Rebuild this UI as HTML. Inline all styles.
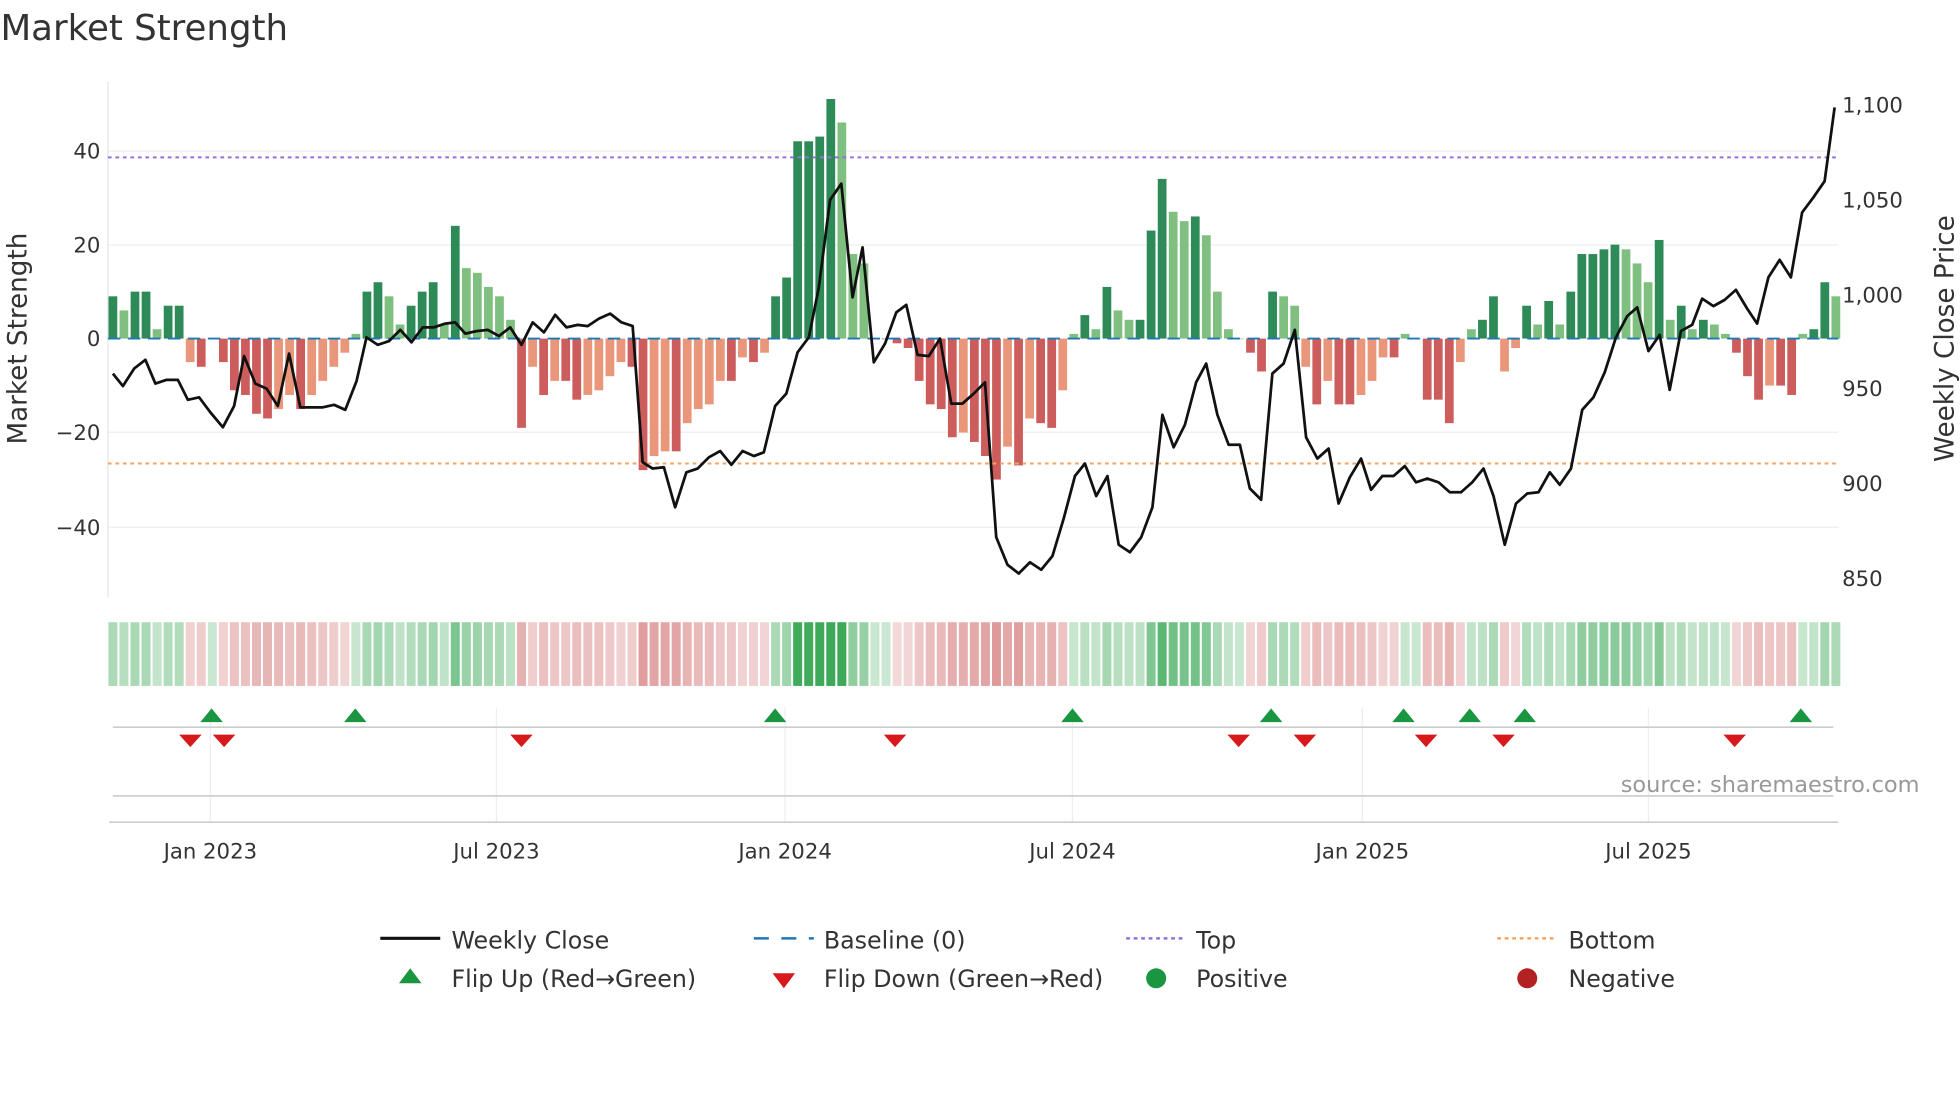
<!DOCTYPE html>
<html><head><meta charset="utf-8"><style>
html,body{margin:0;padding:0;background:#fff;width:1960px;height:1102px;overflow:hidden}
svg{display:block;font-family:"DejaVu Sans","Liberation Sans",sans-serif}
</style></head><body>
<svg id="c" width="1960" height="1102" viewBox="0 0 1568 882" xmlns="http://www.w3.org/2000/svg">
<text x="0" y="32" font-size="28.5" fill="#333">Market Strength</text>
<g stroke="#eee" stroke-width="1">
<line x1="86" x2="1471" y1="121" y2="121"/><line x1="86" x2="1471" y1="196" y2="196"/>
<line x1="86" x2="1471" y1="346" y2="346"/><line x1="86" x2="1471" y1="422" y2="422"/>
</g>
<line x1="86" y1="65" x2="86" y2="478" stroke="#e6e6e6"/>
<g id="bars"></g>
<line x1="86" x2="1471" y1="271" y2="271" stroke="#1f77b4" stroke-width="1.5" stroke-dasharray="10,6"/>
<line x1="86" x2="1471" y1="126" y2="126" stroke="#9370db" stroke-width="1.6" stroke-dasharray="3,3"/>
<line x1="86" x2="1471" y1="371" y2="371" stroke="#f4a460" stroke-width="1.6" stroke-dasharray="3,3"/>
<polyline id="price" fill="none" stroke="#111" stroke-width="2.2" stroke-linejoin="round"/>
<g font-size="17" fill="#333" text-anchor="end">
<text x="80" y="127">40</text><text x="80" y="202">20</text><text x="80" y="277">0</text>
<text x="80" y="352">−20</text><text x="80" y="428">−40</text></g>
<g font-size="17" fill="#333">
<text x="1474" y="90">1,100</text><text x="1474" y="166">1,050</text><text x="1474" y="242">1,000</text>
<text x="1474" y="317">950</text><text x="1474" y="393">900</text><text x="1474" y="469">850</text></g>
<text transform="translate(21,271) rotate(-90)" font-size="21" fill="#333" text-anchor="middle">Market Strength</text>
<text transform="translate(1563,271) rotate(-90)" font-size="21" fill="#333" text-anchor="middle">Weekly Close Price</text>
<g id="heat"></g>
<g stroke="#eee"><line x1="168" x2="168" y1="566" y2="658"/><line x1="397" x2="397" y1="566" y2="658"/><line x1="628" x2="628" y1="566" y2="658"/><line x1="858" x2="858" y1="566" y2="658"/><line x1="1090" x2="1090" y1="566" y2="658"/><line x1="1319" x2="1319" y1="566" y2="658"/></g>
<line x1="90" x2="1467" y1="582" y2="582" stroke="#ccc" stroke-width="1.3"/>
<line x1="90" x2="1467" y1="637" y2="637" stroke="#ccc" stroke-width="1.3"/>
<line x1="87" x2="1471" y1="658" y2="658" stroke="#ccc" stroke-width="1.3"/>
<g id="marks"></g>
<text x="1536" y="634" font-size="18" fill="#999" text-anchor="end">source: sharemaestro.com</text>
<g font-size="17" fill="#333" text-anchor="middle">
<text x="168" y="687">Jan 2023</text><text x="397" y="687">Jul 2023</text><text x="628" y="687">Jan 2024</text>
<text x="858" y="687">Jul 2024</text><text x="1090" y="687">Jan 2025</text><text x="1319" y="687">Jul 2025</text></g>
<g font-size="19" fill="#333">
<line x1="304" x2="352" y1="751" y2="751" stroke="#111" stroke-width="2.5"/><text x="361" y="759">Weekly Close</text>
<line x1="603" x2="651" y1="751" y2="751" stroke="#1f77b4" stroke-width="2" stroke-dasharray="12,10"/><text x="659" y="759">Baseline (0)</text>
<line x1="901" x2="949" y1="751" y2="751" stroke="#9370db" stroke-width="2" stroke-dasharray="3,3"/><text x="957" y="759">Top</text>
<line x1="1198" x2="1246" y1="751" y2="751" stroke="#f4a460" stroke-width="2" stroke-dasharray="3,3"/><text x="1255" y="759">Bottom</text>
<polygon points="328,775 319,787 337,787" fill="#1a9641"/><text x="361" y="790">Flip Up (Red→Green)</text>
<polygon points="618,779 636,779 627,791" fill="#d7191c"/><text x="659" y="790">Flip Down (Green→Red)</text>
<circle cx="925" cy="783" r="8" fill="#1a9641"/><text x="957" y="790">Positive</text>
<circle cx="1222" cy="783" r="8" fill="#b22222"/><text x="1255" y="790">Negative</text>
</g>
</svg>
<script>
var v=[9,6,10,10,2,7,7,-5,-6,0,-5,-11,-12,-16,-17,-15,-12,-15,-12,-9,-6,-3,1,10,12,9,3,7,10,12,3,24,15,14,11,9,4,-19,-6,-12,-9,-9,-13,-12,-11,-8,-5,-6,-28,-25,-24,-24,-18,-15,-14,-9,-9,-4,-5,-3,9,13,42,42,43,51,46,18,16,0,0,-1,-2,-9,-14,-15,-21,-20,-22,-25,-30,-23,-27,-17,-18,-19,-11,1,5,2,11,6,4,4,23,34,27,25,26,22,10,2,0,-3,-7,10,9,7,-6,-14,-9,-14,-14,-12,-9,-4,-4,1,0,-13,-13,-18,-5,2,4,9,-7,-2,7,3,8,3,10,18,18,19,20,19,16,12,21,4,7,2,4,3,1,-3,-8,-13,-10,-10,-12,1,2,12,9];
var ns="http://www.w3.org/2000/svg",n=v.length,x0=90,st=(1469-90)/(n-1);
var B=document.getElementById("bars"),H=document.getElementById("heat");
function el(t,a,p){var e=document.createElementNS(ns,t);for(var k in a)e.setAttribute(k,a[k]);p.appendChild(e);}
for(var i=0;i<n;i++){var x=x0+i*st,val=v[i],prev=i?v[i-1]:0;
var inc=Math.abs(val)>=Math.abs(prev);var c;
if(val>=0)c=inc?"#2e8b57":"#7fbf7f";else c=inc?"#cd5c5c":"#e9967a";
var y=271-val*3.76;el("rect",{x:x-3.5,y:Math.min(y,271),width:7,height:Math.max(Math.abs(val*3.76),0.5),fill:c},B);
var a=Math.min(1,0.28+Math.abs(val)/60);var hc=val>=0?"rgba(40,160,70,"+(a*0.9)+")":"rgba(200,80,80,"+(a*0.75)+")";
el("rect",{x:x-3.6,y:498,width:7.2,height:51,fill:hc},H);}
var p=[90,299,98,309,107,295,116,288,124,307,133,304,142,304,150,320,159,318,168,330,178,342,187,325,195,285,204,307,213,311,222,325,231,283,240,326,249,326,258,326,267,324,276,328,285,305,293,270,302,276,311,273,320,264,329,274,338,262,347,262,356,259,364,258,372,267,381,265,390,264,399,269,408,262,417,276,426,258,435,266,444,252,453,262,462,260,470,261,479,255,488,251,497,258,506,261,514,370,522,375,531,374,540,406,549,378,558,375,567,366,576,361,585,372,594,361,603,365,611,362,620,325,629,315,638,282,647,270,655,230,664,160,673,147,682,238,690,198,699,290,708,275,717,250,725,244,734,284,743,285,752,271,761,323,770,323,779,315,788,306,797,430,806,452,815,459,824,450,833,456,842,445,851,415,860,381,868,371,877,397,886,381,895,436,904,442,913,430,922,406,930,332,939,358,948,340,957,306,965,291,974,332,983,356,992,356,1000,391,1009,400,1018,299,1027,291,1036,264,1045,350,1054,367,1063,359,1071,403,1080,382,1089,367,1097,392,1106,381,1115,381,1124,373,1133,386,1142,383,1151,386,1160,394,1169,394,1178,386,1187,375,1195,397,1204,436,1213,403,1222,395,1231,394,1240,378,1248,388,1257,375,1266,328,1275,318,1284,298,1293,270,1302,253,1310,246,1319,281,1328,268,1336,312,1345,265,1354,260,1362,239,1371,245,1380,240,1389,232,1398,247,1406,259,1415,222,1424,208,1433,222,1442,170,1451,158,1460,145,1468,86];
var s="";for(var j=0;j<p.length;j+=2)s+=p[j]+","+p[j+1]+" ";document.getElementById("price").setAttribute("points",s);
var M=document.getElementById("marks");
[169,284,620,858,1017,1123,1176,1220,1441].forEach(function(x){el("polygon",{points:(x)+",567 "+(x-9)+",578 "+(x+9)+",578",fill:"#1a9641"},M);});
[152,179,417,716,991,1044,1141,1203,1388].forEach(function(x){el("polygon",{points:(x-9)+",588 "+(x+9)+",588 "+x+",598",fill:"#d7191c"},M);});
</script>
</body></html>
